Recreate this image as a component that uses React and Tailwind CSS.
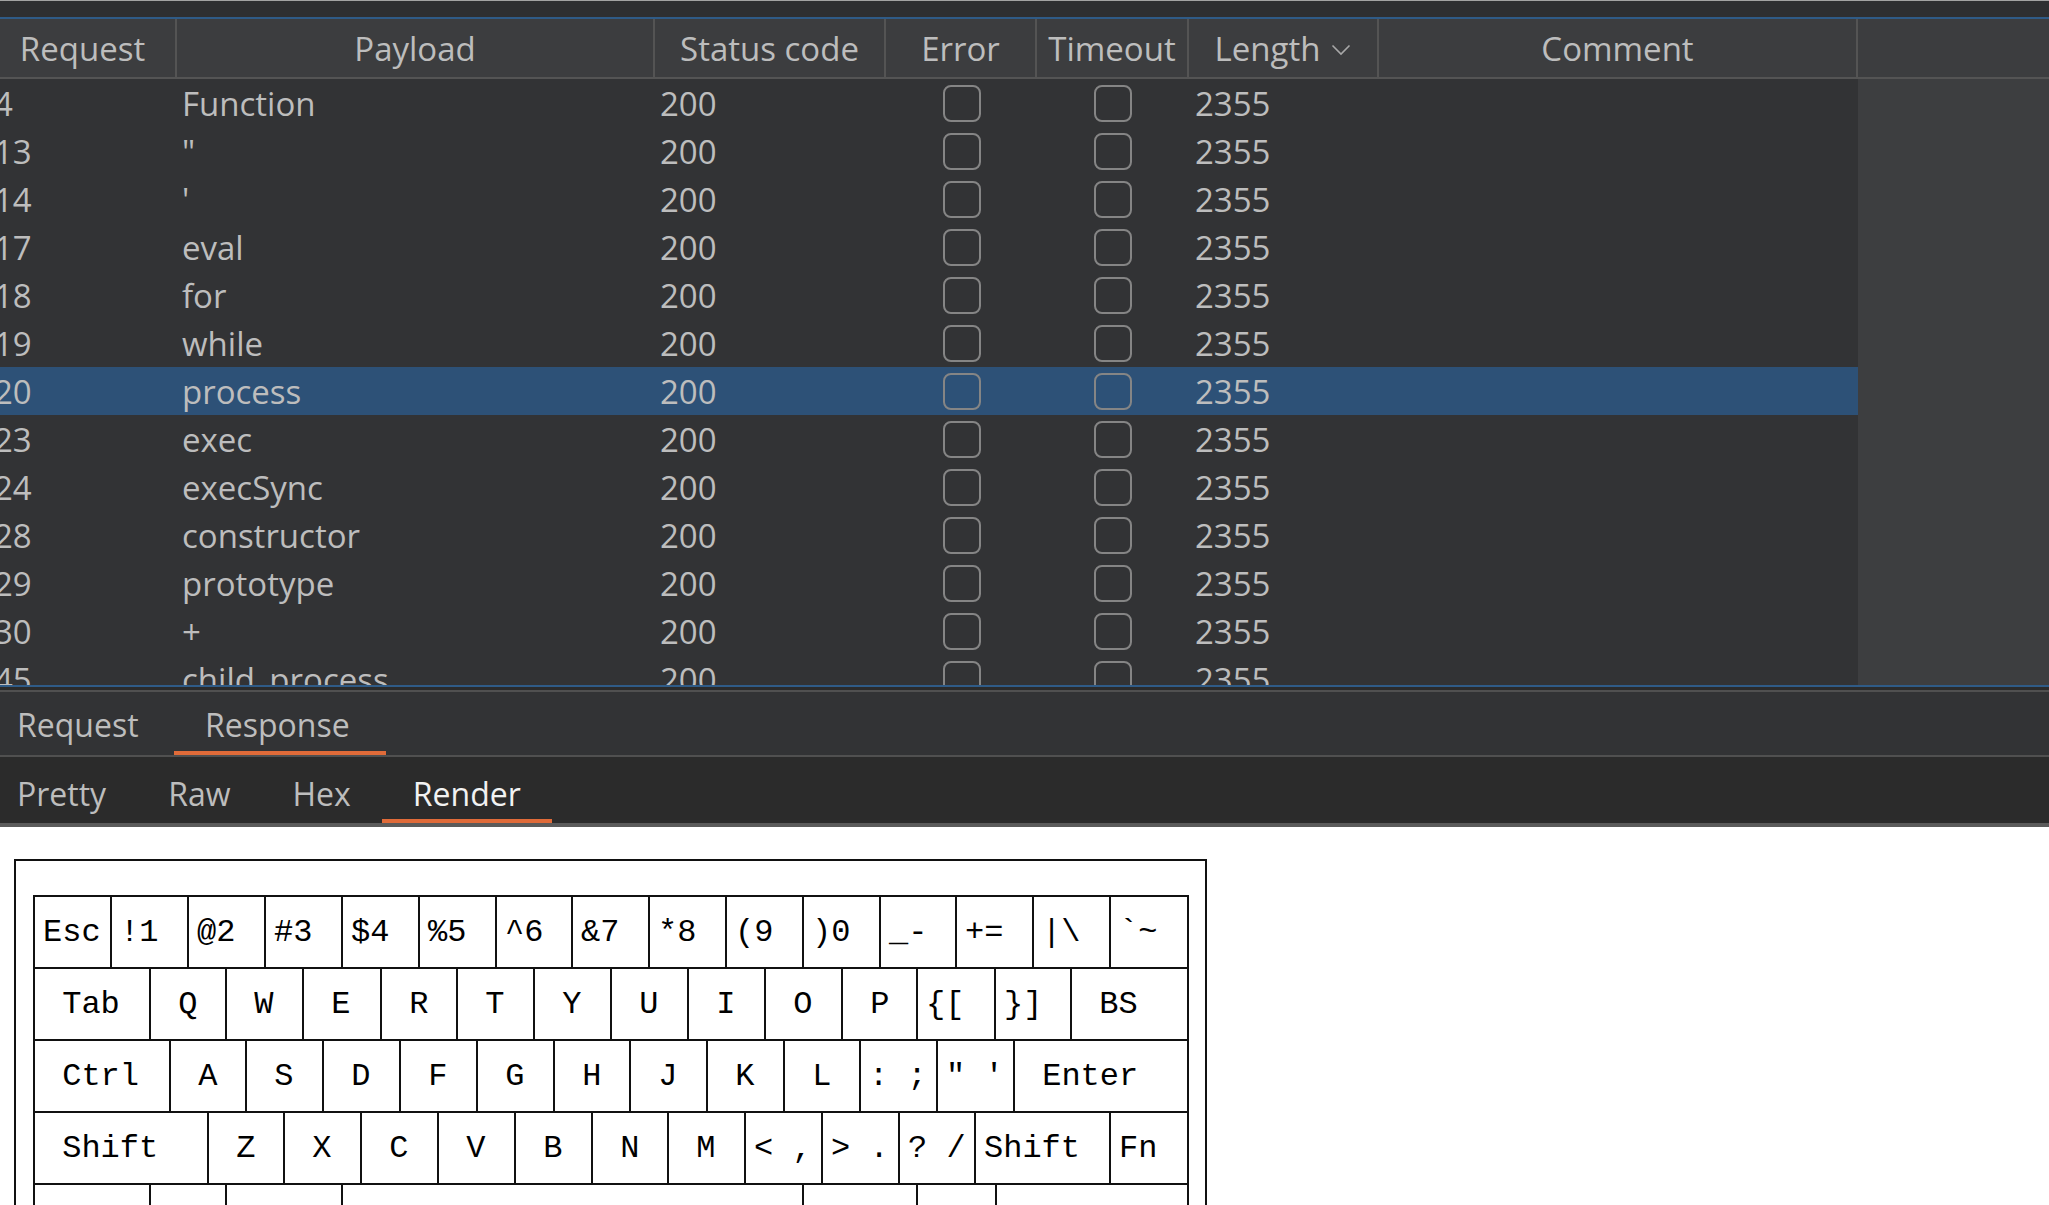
import { ChevronDown } from 'lucide-react';

const results = [
  { id: '4', payload: 'Function' },
  { id: '13', payload: '"' },
  { id: '14', payload: "'" },
  { id: '17', payload: 'eval' },
  { id: '18', payload: 'for' },
  { id: '19', payload: 'while' },
  { id: '20', payload: 'process', selected: true },
  { id: '23', payload: 'exec' },
  { id: '24', payload: 'execSync' },
  { id: '28', payload: 'constructor' },
  { id: '29', payload: 'prototype' },
  { id: '30', payload: '+' },
  { id: '45', payload: 'child_process' },
];

// key label + width class, one array per keyboard row
const keyRows = [
  [
    ['Esc', 'w-[77px]'], ['!1', 'w-[77px]'], ['@2', 'w-[77px]'], ['#3', 'w-[77px]'], ['$4', 'w-[77px]'],
    ['%5', 'w-[77px]'], ['^6', 'w-[76px]'], ['&7', 'w-[77px]'], ['*8', 'w-[77px]'], ['(9', 'w-[77px]'],
    [')0', 'w-[77px]'], ['_-', 'w-[76px]'], ['+=', 'w-[77px]'], ['|\\', 'w-[77px]'], ['`~', 'w-[78px]'],
  ],
  [
    [' Tab', 'w-[116px]'], [' Q', 'w-[76px]'], [' W', 'w-[77px]'], [' E', 'w-[78px]'], [' R', 'w-[76px]'],
    [' T', 'w-[77px]'], [' Y', 'w-[77px]'], [' U', 'w-[77px]'], [' I', 'w-[77px]'], [' O', 'w-[77px]'],
    [' P', 'w-[75px]'], ['{[', 'w-[78px]'], ['}]', 'w-[76px]'], [' BS', 'w-[117px]'],
  ],
  [
    [' Ctrl', 'w-[136px]'], [' A', 'w-[76px]'], [' S', 'w-[77px]'], [' D', 'w-[77px]'], [' F', 'w-[77px]'],
    [' G', 'w-[77px]'], [' H', 'w-[76px]'], [' J', 'w-[77px]'], [' K', 'w-[77px]'], [' L', 'w-[76px]'],
    [': ;', 'w-[77px]'], ['" \'', 'w-[77px]'], [' Enter', 'w-[174px]'],
  ],
  [
    [' Shift', 'w-[174px]'], [' Z', 'w-[76px]'], [' X', 'w-[77px]'], [' C', 'w-[77px]'], [' V', 'w-[77px]'],
    [' B', 'w-[77px]'], [' N', 'w-[76px]'], [' M', 'w-[77px]'], ['< ,', 'w-[77px]'], ['> .', 'w-[77px]'],
    ['? /', 'w-[76px]'], ['Shift', 'w-[135px]'], ['Fn', 'w-[78px]'],
  ],
  [
    ['', 'w-[116px]'], ['', 'w-[76px]'], ['', 'w-[116px]'], ['', 'w-[461px]'], ['', 'w-[114px]'],
    ['', 'w-[79px]'], ['', 'w-[192px]'],
  ],
];

const Checkbox = () => (
  <div className="w-[38px] h-[37px] rounded-[8px] border-2 border-[#858585]"></div>
);

const HeaderCell = ({ className, children }) => (
  <div className={`${className} h-full flex items-center justify-center border-r-2 border-[#545454] shrink-0`}>
    {children}
  </div>
);

const App = () => {
  return (
    <div className="w-[2049px] h-[1205px] overflow-hidden bg-white font-['Open_Sans','Noto_Sans',sans-serif] text-[33px] leading-none text-[#bdbdbd]">
      {/* Top strip */}
      <div className="h-[1px] bg-[#a3a3a3]"></div>
      <div className="h-[16px] bg-[#2e2f31]"></div>
      <div className="h-[2px] bg-[#2f5b87]"></div>

      {/* Results table header */}
      <div className="h-[60px] bg-[#3c3d3f] border-b-2 border-[#545454] flex overflow-hidden">
        <div className="flex h-full -ml-[10px]">
          <HeaderCell className="w-[187px]">Request</HeaderCell>
          <HeaderCell className="w-[478px]">Payload</HeaderCell>
          <HeaderCell className="w-[231px]">Status code</HeaderCell>
          <HeaderCell className="w-[151px]">Error</HeaderCell>
          <HeaderCell className="w-[152px]">Timeout</HeaderCell>
          <HeaderCell className="w-[190px]">
            <span>Length</span>
            <svg width="20" height="12" viewBox="0 0 20 12" className="ml-[11px] mt-[4px]">
              <polyline points="1.5,1.5 10,10 18.5,1.5" fill="none" stroke="#a8a8a8" strokeWidth="1.6" />
            </svg>
          </HeaderCell>
          <HeaderCell className="w-[479px]">Comment</HeaderCell>
        </div>
      </div>

      {/* Results table body */}
      <div className="h-[606px] flex overflow-hidden bg-[#3d3e40]">
        <div className="w-[1868px] shrink-0 -ml-[10px] bg-[#323335] flex flex-col">
          {results.map((r) => (
            <div key={r.id} className={`h-[48px] shrink-0 flex items-center ${r.selected ? 'bg-[#2d5177]' : ''}`}>
              <div className="w-[187px] pl-[4px] shrink-0">{r.id}</div>
              <div className="w-[478px] pl-[5px] shrink-0">{r.payload}</div>
              <div className="w-[231px] pl-[5px] shrink-0">200</div>
              <div className="w-[151px] shrink-0 flex justify-center"><Checkbox /></div>
              <div className="w-[152px] shrink-0 flex justify-center"><Checkbox /></div>
              <div className="w-[190px] pl-[6px] shrink-0">2355</div>
              <div className="w-[479px] shrink-0"></div>
            </div>
          ))}
        </div>
      </div>

      {/* Request / Response tabs */}
      <div className="h-[2px] bg-[#2f5b87]"></div>
      <div className="h-[3px] bg-[#2b2b2b]"></div>
      <div className="h-[2px] bg-[#505050]"></div>
      <div className="h-[63px] bg-[#323335] flex text-[32px]">
        <div className="flex h-full -ml-[14px]">
          <div className="h-full flex items-end pb-[10px] pl-[31px] w-[188px] border-b-4 border-transparent">Request</div>
          <div className="h-full flex items-end pb-[10px] pl-[31px] w-[212px] border-b-4 border-[#e06b39]">Response</div>
        </div>
      </div>
      <div className="h-[2px] bg-[#505050]"></div>
      <div className="h-[66px] bg-[#2b2b2b] flex text-[32px]">
        <div className="flex h-full -ml-[14px]">
          <div className="h-full flex items-end pb-[9px] px-[31px] border-b-4 border-transparent">Pretty</div>
          <div className="h-full flex items-end pb-[9px] px-[31px] border-b-4 border-transparent">Raw</div>
          <div className="h-full flex items-end pb-[9px] px-[31px] border-b-4 border-transparent">Hex</div>
          <div className="h-full flex items-end pb-[9px] px-[31px] border-b-4 border-[#e06b39] text-[#f2f2f2]">Render</div>
        </div>
      </div>
      <div className="h-[4px] bg-[#5b5b5b]"></div>

      {/* Rendered response */}
      <div className="bg-white pt-[32px] pl-[14px]">
        <div className="w-[1193px] h-[500px] border-2 border-[#111] pt-[34px] pl-[17px]">
          <div className="w-[1156px] border-t-2 border-[#111] font-['Liberation_Mono','Courier_New',monospace] text-[32px] text-black">
            {keyRows.map((row, i) => (
              <div key={i} className="flex border-l-2 border-[#111]">
                {row.map(([label, w], j) => (
                  <div key={j} className={`${w} h-[72px] shrink-0 border-r-2 border-b-2 border-[#111] flex items-center pl-[8px] pt-[2px] whitespace-pre`}>
                    {label}
                  </div>
                ))}
              </div>
            ))}
          </div>
        </div>
      </div>
    </div>
  );
};

export default App;
